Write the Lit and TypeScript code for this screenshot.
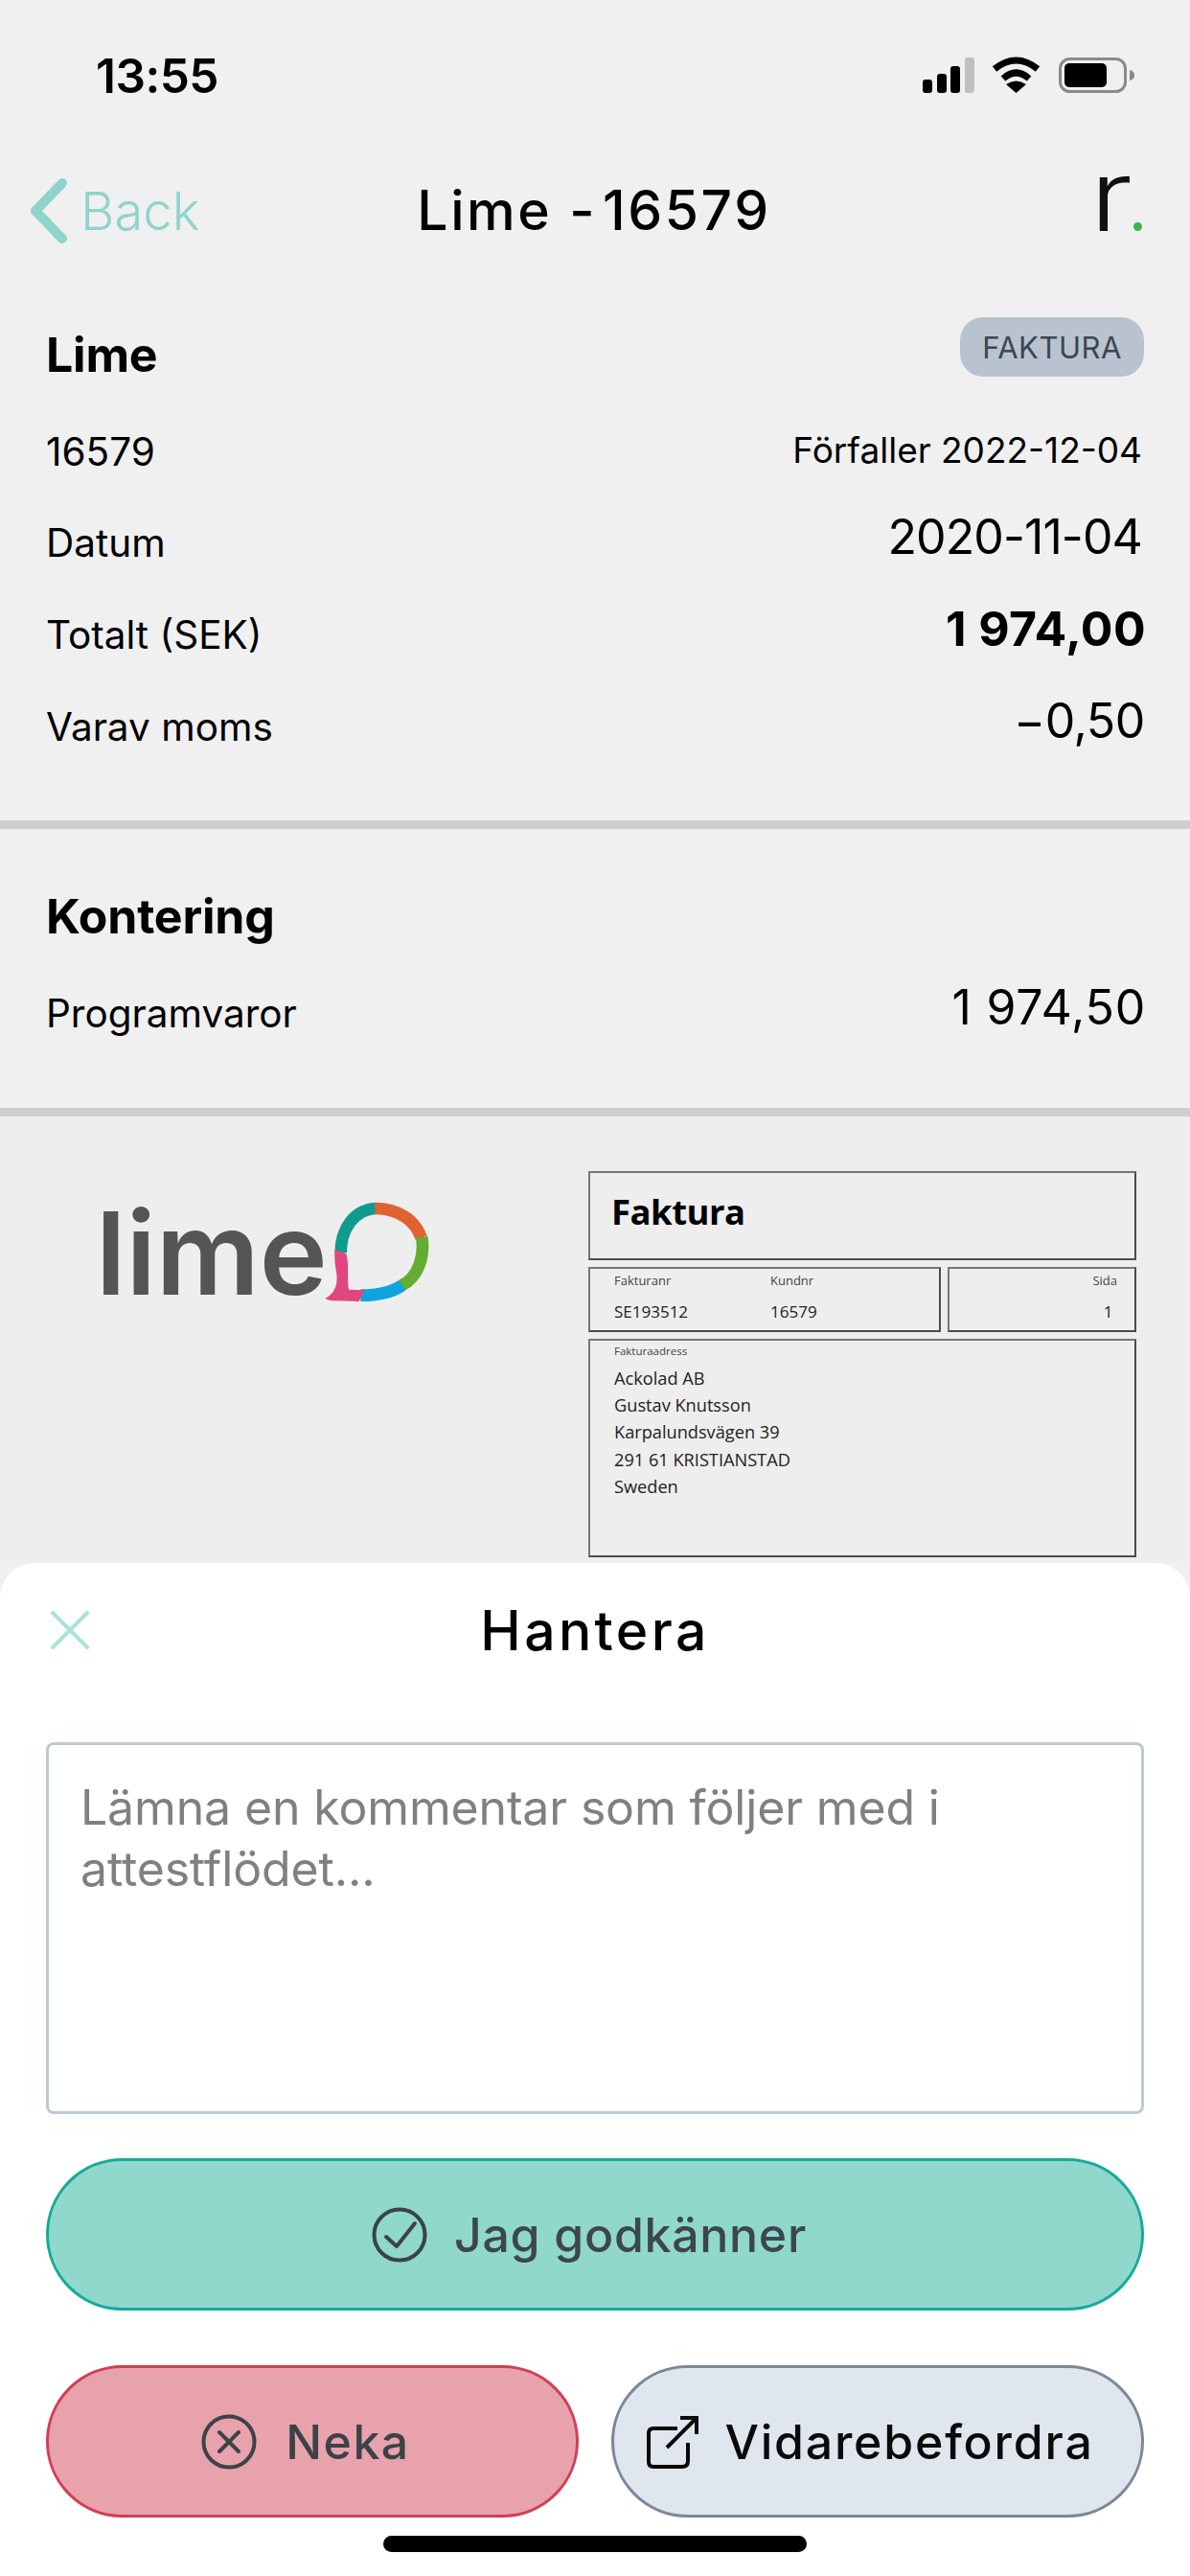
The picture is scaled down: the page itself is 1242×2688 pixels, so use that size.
import { LitElement, html, css } from "lit";
import { customElement } from "lit/decorators.js";

@customElement("app-root")
export class AppRoot extends LitElement {
  static styles = css`
    :host { display: block; width: 1242px; height: 2688px; background: #f0f0f0; font-family: Inter, "Liberation Sans", sans-serif; color: #000; overflow: hidden; }
    * { box-sizing: border-box; }
    .page { display: flex; flex-direction: column; height: 2688px; }
    .top { height: 1631px; flex: none; overflow: hidden; }

    .status { height: 156px; display: flex; justify-content: space-between; padding: 59px 58px 0 100px; }
    .time { font-size: 49.5px; font-weight: 600; line-height: 40px; letter-spacing: -0.5px; }
    .sicons { display: flex; gap: 18px; height: 40px; align-items: flex-start; margin-top: -1px; }

    .nav { height: 128px; display: grid; grid-template-columns: 1fr auto 1fr; align-items: center; padding: 0 50px 0 48px; }
    .back { display: flex; align-items: center; gap: 13px; color: #8fd4ca; font-size: 54.5px; font-weight: 300; margin-left: -18px; }
    .title { font-size: 57px; font-weight: 500; letter-spacing: 2.6px; line-height: 60px; }
    .num { margin-left: -12px; }
    .brand { justify-self: end; align-self: start; display: flex; align-items: baseline; margin-top: -4px; }
    .brand-r { font-size: 103px; font-weight: 300; line-height: 103px; color: #111; transform: scaleX(1.2); transform-origin: right center; }
    .brand-dot { width: 9px; height: 9px; border-radius: 50%; background: #3cb44a; margin-left: 1px; }

    .sec { padding: 0 48px; }
    .sec-a { padding-bottom: 50px; }
    .sec-b { padding-bottom: 50px; }
    .head { display: flex; justify-content: space-between; align-items: center; }
    .head-a { height: 140px; padding-top: 32px; }
    .head-b { height: 145px; padding-top: 36px; }
    .h { font-size: 50px; font-weight: 700; line-height: 60px; letter-spacing: -0.2px; }
    .badge { height: 62px; width: 192px; margin-bottom: 16px; border-radius: 24px; background: #b8c3cf; color: #3b4652; font-size: 31px; display: flex; align-items: center; justify-content: center; letter-spacing: 0.5px; }
    .row { height: 95.6px; display: flex; justify-content: space-between; align-items: center; }
    .lab { font-size: 40.5px; line-height: 48px; }
    .val { font-size: 50px; line-height: 60px; padding-bottom: 14px; }
    .val.small { font-size: 37px; padding-bottom: 4px; padding-right: 2px; }
    .val.date { letter-spacing: -0.9px; padding-right: 2px; }
    .val.amt { letter-spacing: 0.8px; margin-right: -2px; }
    .val.neg { letter-spacing: -0.4px; margin-right: -1px; }
    .val.bold { font-weight: 700; letter-spacing: 0.4px; }
    .rule { height: 9px; background: #cfcfcf; flex: none; }

    .doc { display: flex; background: #eeeeee; height: 466px; padding: 57px 56px 0 100px; justify-content: space-between; }
    .logo { display: flex; align-items: flex-end; height: 134px; margin-top: 2px; }
    .lime { font-size: 120px; line-height: 100px; color: #555; font-weight: 600; letter-spacing: 0; }
    .bubble { margin-left: -4px; margin-bottom: -4px; }

    .inv { width: 572px; display: grid; grid-template-columns: 368px 197px; grid-template-rows: 93px 68px 228px; gap: 7px; font-family: "Open Sans", sans-serif; color: #222; }
    .bx { border: 2px solid #4c4c4c; border-top-color: #777; border-left-color: #777; }
    .wide { grid-column: 1 / 3; }
    .inv-title { font-size: 36.5px; font-weight: 700; color: #000; padding: 15px 0 0 22px; line-height: 50px; letter-spacing: -0.5px; }
    .ids { display: grid; grid-template-columns: 163px 1fr; padding: 2px 0 0 25px; }
    .lbl { font-size: 13px; line-height: 20px; color: #444; }
    .dat { font-size: 17px; line-height: 24px; margin-top: 11px; }
    .page-no { text-align: right; padding: 2px 18px 0 0; }
    .addr { padding: 2px 0 0 25px; }
    .addr .lbl { font-size: 11.5px; line-height: 18px; }
    .lines { font-size: 18.2px; line-height: 28.2px; margin-top: 5px; }

    .sheet { flex: 1; background: #fff; border-radius: 36px 36px 0 0; padding: 0 48px; display: flex; flex-direction: column; }
    .sheet-head { height: 187px; display: grid; grid-template-columns: 1fr auto 1fr; align-items: start; padding-top: 41px; }
    .x { margin: 9px 0 0 5px; display: block; }
    .sheet-title { font-size: 57px; font-weight: 500; letter-spacing: 3.4px; line-height: 60px; }
    .comment { height: 388px; border: 3px solid #bccad6; border-radius: 8px; padding: 33px 33px; font-size: 50px; line-height: 64px; color: #808080; letter-spacing: -0.15px; flex: none; }
    .btn { height: 159px; border-radius: 80px; border: 3px solid; display: flex; align-items: center; justify-content: center; font-size: 50px; font-weight: 500; letter-spacing: 1.5px; color: #3c4650; flex: none; }
    .ok { margin-top: 46px; background: #90d7cc; border-color: #14ab9a; gap: 28px; letter-spacing: 0.7px; padding-right: 12px; }
    .btns { display: flex; gap: 34px; margin-top: 57px; }
    .no { width: 556px; background: #e8a2ac; border-color: #d13f55; gap: 30px; color: #3c4348; padding-right: 14px; }
    .fwd { width: 556px; background: #e0e6ee; border-color: #7b8899; gap: 26px; color: #0a0a0a; padding-right: 16px; letter-spacing: 1.8px; }
    .home { width: 442px; height: 17px; border-radius: 9px; background: #000; align-self: center; margin-top: 19px; flex: none; }
  `;

  render() {
    return html`
      <div class="page">
        <div class="top">
          <div class="status">
            <div class="time">13:55</div>
            <div class="sicons">
              <svg width="54" height="40" viewBox="0 0 54 40">
                <rect x="0" y="25" width="10" height="14" rx="3"></rect>
                <rect x="15" y="19" width="10" height="20" rx="3"></rect>
                <rect x="29" y="11" width="10" height="28" rx="3"></rect>
                <rect x="44" y="2" width="10" height="37" rx="3" fill="#bfbfbf"></rect>
              </svg>
              <svg width="51" height="40" viewBox="0 0 51 40">
                <path d="M3 14 Q25.5 -4 48 14" fill="none" stroke="#000" stroke-width="7"></path>
                <path d="M12 24 Q25.5 12 39 24" fill="none" stroke="#000" stroke-width="7"></path>
                <path d="M25.5 39 L15 30 Q25.5 23 36 30 Z"></path>
              </svg>
              <svg width="79" height="40" viewBox="0 0 79 40" style="margin-left:1px">
                <rect x="1.5" y="3.5" width="68" height="34" rx="10" fill="none" stroke="#8a8a8a" stroke-width="3"></rect>
                <rect x="6" y="8" width="44" height="25" rx="5"></rect>
                <path d="M74 15 Q79 16 79 20.5 Q79 25 74 26 Z" fill="#8a8a8a"></path>
              </svg>
            </div>
          </div>

          <div class="nav">
            <div class="back">
              <svg width="41" height="70" viewBox="0 0 41 70">
                <path d="M35 6 L7 35 L35 64" fill="none" stroke="#8fd4ca" stroke-width="10" stroke-linecap="round" stroke-linejoin="round"></path>
              </svg>
              <span>Back</span>
            </div>
            <div class="title">Lime - <span class="num">16579</span></div>
            <div class="brand"><span class="brand-r">r</span><span class="brand-dot"></span></div>
          </div>

          <div class="sec sec-a">
            <div class="head head-a"><div class="h">Lime</div><div class="badge">FAKTURA</div></div>
            <div class="row"><div class="lab">16579</div><div class="val small">Förfaller 2022-12-04</div></div>
            <div class="row"><div class="lab">Datum</div><div class="val date">2020-11-04</div></div>
            <div class="row"><div class="lab">Totalt (SEK)</div><div class="val amt bold">1 974,00</div></div>
            <div class="row"><div class="lab">Varav moms</div><div class="val neg">−0,50</div></div>
          </div>
          <div class="rule"></div>
          <div class="sec sec-b">
            <div class="head head-b"><div class="h">Kontering</div></div>
            <div class="row"><div class="lab">Programvaror</div><div class="val amt">1 974,50</div></div>
          </div>
          <div class="rule"></div>

          <div class="doc">
            <div class="logo">
              <span class="lime">lime</span>
              <svg class="bubble" width="110" height="108" viewBox="840 185 330 324">
                <path d="M893 345 C893 270 935 210 1002 206" fill="none" stroke="#0f9b8e" stroke-width="38"></path>
                <path d="M1000 206 C1070 206 1125 240 1145 298" fill="none" stroke="#e0622e" stroke-width="38"></path>
                <path d="M1147 296 C1155 350 1140 420 1082 448" fill="none" stroke="#63ad33" stroke-width="38"></path>
                <path d="M1085 447 C1050 470 1000 478 955 478" fill="none" stroke="#0ca5e0" stroke-width="38"></path>
                <path d="M875 335 L910 348 C920 380 912 430 918 460 L968 462 L950 497 L880 495 C860 495 845 490 845 487 C870 475 885 450 880 410 C875 380 872 360 875 335 Z" fill="#e0467f"></path>
              </svg>
            </div>
            <div class="inv">
              <div class="bx wide inv-title">Faktura</div>
              <div class="bx ids">
                <div><div class="lbl">Fakturanr</div><div class="dat">SE193512</div></div>
                <div><div class="lbl">Kundnr</div><div class="dat">16579</div></div>
              </div>
              <div class="bx page-no"><div class="lbl">Sida</div><div class="dat">1&nbsp;</div></div>
              <div class="bx wide addr">
                <div class="lbl">Fakturaadress</div>
                <div class="lines">Ackolad AB<br />Gustav Knutsson<br />Karpalundsvägen 39<br />291 61 KRISTIANSTAD<br />Sweden</div>
              </div>
            </div>
          </div>
        </div>

        <div class="sheet">
          <div class="sheet-head">
            <svg class="x" width="40" height="40" viewBox="0 0 40 40">
              <path d="M2 2 L38 38 M38 2 L2 38" fill="none" stroke="#a8e3da" stroke-width="4" stroke-linecap="round"></path>
            </svg>
            <div class="sheet-title">Hantera</div>
          </div>
          <div class="comment">Lämna en kommentar som följer med i<br />attestflödet...</div>
          <div class="btn ok">
            <svg width="58" height="58" viewBox="0 0 58 58">
              <circle cx="29" cy="29" r="26.5" fill="none" stroke="#3c4348" stroke-width="4"></circle>
              <path d="M15 31 L26 41 L45 17" fill="none" stroke="#3c4348" stroke-width="4" stroke-linecap="round" stroke-linejoin="round"></path>
            </svg>
            <span>Jag godkänner</span>
          </div>
          <div class="btns">
            <div class="btn no">
              <svg width="58" height="58" viewBox="0 0 58 58">
                <circle cx="29" cy="29" r="26.5" fill="none" stroke="#3c4348" stroke-width="4"></circle>
                <path d="M19 19 L39 39 M39 19 L19 39" fill="none" stroke="#3c4348" stroke-width="4" stroke-linecap="round"></path>
              </svg>
              <span>Neka</span>
            </div>
            <div class="btn fwd">
              <svg width="56" height="56" viewBox="0 0 56 56">
                <path d="M33 14 H8 Q3 14 3 19 V49 Q3 54 8 54 H38 Q44 54 44 48 V29" fill="none" stroke="#0a0a0a" stroke-width="4"></path>
                <path d="M22 34 L52 4 M36 3 H53 V20" fill="none" stroke="#0a0a0a" stroke-width="4"></path>
              </svg>
              <span>Vidarebefordra</span>
            </div>
          </div>
          <div class="home"></div>
        </div>
      </div>
    `;
  }
}
